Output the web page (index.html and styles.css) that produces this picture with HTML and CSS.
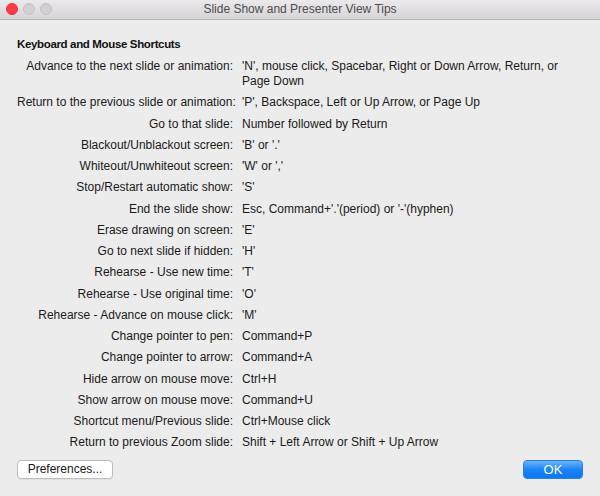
FILE: index.html
```html
<!DOCTYPE html>
<html>
<head>
<meta charset="utf-8">
<link rel="stylesheet" href="styles.css">
</head>
<body>
<div class="window">
  <div class="titlebar">
    <div class="lights">
      <span class="light red"></span>
      <span class="light gray"></span>
      <span class="light gray"></span>
    </div>
    <div class="title">Slide Show and Presenter View Tips</div>
  </div>
  <div class="content">
    <h1 class="heading">Keyboard and Mouse Shortcuts</h1>
    <div class="grid">
      <div class="label">Advance to the next slide or animation:</div><div class="value">'N', mouse click, Spacebar, Right or Down Arrow, Return, or Page Down</div>
      <div class="label">Return to the previous slide or animation:</div><div class="value">'P', Backspace, Left or Up Arrow, or Page Up</div>
      <div class="label">Go to that slide:</div><div class="value">Number followed by Return</div>
      <div class="label">Blackout/Unblackout screen:</div><div class="value">'B' or '.'</div>
      <div class="label">Whiteout/Unwhiteout screen:</div><div class="value">'W' or ','</div>
      <div class="label">Stop/Restart automatic show:</div><div class="value">'S'</div>
      <div class="label">End the slide show:</div><div class="value">Esc, Command+'.'(period) or '-'(hyphen)</div>
      <div class="label">Erase drawing on screen:</div><div class="value">'E'</div>
      <div class="label">Go to next slide if hidden:</div><div class="value">'H'</div>
      <div class="label">Rehearse - Use new time:</div><div class="value">'T'</div>
      <div class="label">Rehearse - Use original time:</div><div class="value">'O'</div>
      <div class="label">Rehearse - Advance on mouse click:</div><div class="value">'M'</div>
      <div class="label">Change pointer to pen:</div><div class="value">Command+P</div>
      <div class="label">Change pointer to arrow:</div><div class="value">Command+A</div>
      <div class="label">Hide arrow on mouse move:</div><div class="value">Ctrl+H</div>
      <div class="label">Show arrow on mouse move:</div><div class="value">Command+U</div>
      <div class="label">Shortcut menu/Previous slide:</div><div class="value">Ctrl+Mouse click</div>
      <div class="label">Return to previous Zoom slide:</div><div class="value">Shift + Left Arrow or Shift + Up Arrow</div>
    </div>
  </div>
  <div class="footer">
    <button class="btn btn-default">Preferences...</button>
    <button class="btn btn-primary">OK</button>
  </div>
</div>
</body>
</html>
```

FILE: styles.css
```css
html, body {
  margin: 0;
  padding: 0;
  background: #ececec;
}
body {
  font-family: "Liberation Sans", Arial, sans-serif;
  font-size: 12px;
  color: #1a1a1a;
}
.window {
  width: 600px;
  height: 496px;
  display: flex;
  flex-direction: column;
  background: #ececec;
  overflow: hidden;
}
.titlebar {
  height: 19px;
  flex: none;
  display: flex;
  align-items: center;
  background: linear-gradient(#ebe9eb, #d6d4d6);
  border-bottom: 1px solid #b4b2b4;
  position: relative;
}
.lights {
  display: flex;
  gap: 5px;
  padding-left: 6px;
  position: absolute;
  left: 0;
  top: 3px;
}
.light {
  width: 12px;
  height: 12px;
  border-radius: 50%;
  box-sizing: border-box;
}
.light.red {
  background: #fc3b45;
  border: 1px solid #e0343d;
}
.light.gray {
  background: #d2d0d2;
  border: 1px solid #c4c2c4;
}
.title {
  flex: 1;
  text-align: center;
  color: #4d4d4d;
  font-size: 12px;
  line-height: 19px;
}
.content {
  padding: 17px 0 0 17px;
  flex: 1;
}
.heading {
  margin: 0 0 7px 0;
  font-size: 11.5px;
  letter-spacing: -0.35px;
  line-height: 15px;
  font-weight: bold;
  color: #111;
}
.grid {
  display: grid;
  grid-template-columns: 216px 320px;
  column-gap: 9px;
  row-gap: 6.25px;
  line-height: 15px;
}
.label {
  text-align: right;
  white-space: nowrap;
}
.footer {
  flex: none;
  display: flex;
  justify-content: space-between;
  align-items: center;
  padding: 0 17px 17px 17px;
}
.btn {
  font-family: "Liberation Sans", Arial, sans-serif;
  font-size: 12px;
  height: 19px;
  line-height: 17px;
  padding: 0;
  border-radius: 4px;
  box-sizing: border-box;
}
.btn-default {
  width: 96px;
  background: #ffffff;
  border: 1px solid #bdbdbd;
  color: #1a1a1a;
  box-shadow: 0 1px 0 rgba(0,0,0,0.05);
}
.btn-primary {
  width: 60px;
  margin-right: 0;
  background: linear-gradient(#6db4fb, #1a84f6 50%, #0b78f1);
  border: 1px solid #2a80e8;
  color: #ffffff;
  font-size: 13px;
}
```
